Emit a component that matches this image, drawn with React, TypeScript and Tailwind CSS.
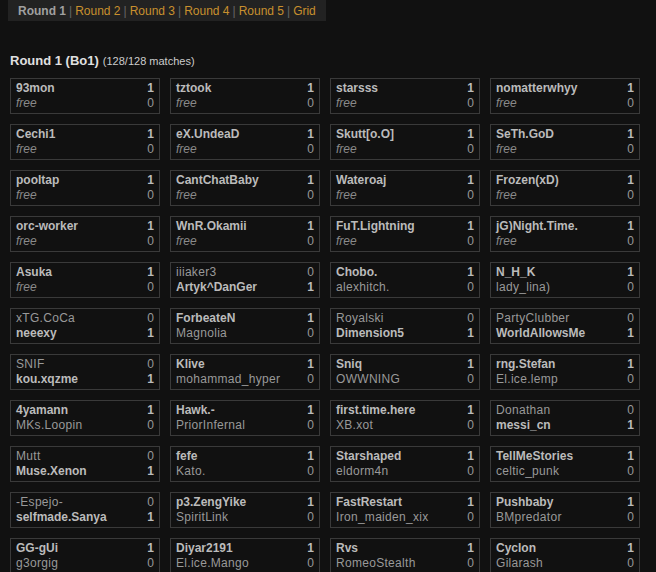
import React from 'react';

type Match = [string, number, string, number];

const matches: Match[] = [
  ['93mon', 1, 'free', 0],
  ['tztook', 1, 'free', 0],
  ['starsss', 1, 'free', 0],
  ['nomatterwhyy', 1, 'free', 0],
  ['Cechi1', 1, 'free', 0],
  ['eX.UndeaD', 1, 'free', 0],
  ['Skutt[o.O]', 1, 'free', 0],
  ['SeTh.GoD', 1, 'free', 0],
  ['pooltap', 1, 'free', 0],
  ['CantChatBaby', 1, 'free', 0],
  ['Wateroaj', 1, 'free', 0],
  ['Frozen(xD)', 1, 'free', 0],
  ['orc-worker', 1, 'free', 0],
  ['WnR.Okamii', 1, 'free', 0],
  ['FuT.Lightning', 1, 'free', 0],
  ['jG)Night.Time.', 1, 'free', 0],
  ['Asuka', 1, 'free', 0],
  ['iiiaker3', 0, 'Artyk^DanGer', 1],
  ['Chobo.', 1, 'alexhitch.', 0],
  ['N_H_K', 1, 'lady_lina)', 0],
  ['xTG.CoCa', 0, 'neeexy', 1],
  ['ForbeateN', 1, 'Magnolia', 0],
  ['Royalski', 0, 'Dimension5', 1],
  ['PartyClubber', 0, 'WorldAllowsMe', 1],
  ['SNIF', 0, 'kou.xqzme', 1],
  ['Klive', 1, 'mohammad_hyper', 0],
  ['Sniq', 1, 'OWWNING', 0],
  ['rng.Stefan', 1, 'El.ice.lemp', 0],
  ['4yamann', 1, 'MKs.Loopin', 0],
  ['Hawk.-', 1, 'PriorInfernal', 0],
  ['first.time.here', 1, 'XB.xot', 0],
  ['Donathan', 0, 'messi_cn', 1],
  ['Mutt', 0, 'Muse.Xenon', 1],
  ['fefe', 1, 'Kato.', 0],
  ['Starshaped', 1, 'eldorm4n', 0],
  ['TellMeStories', 1, 'celtic_punk', 0],
  ['-Espejo-', 0, 'selfmade.Sanya', 1],
  ['p3.ZengYike', 1, 'SpiritLink', 0],
  ['FastRestart', 1, 'Iron_maiden_xix', 0],
  ['Pushbaby', 1, 'BMpredator', 0],
  ['GG-gUi', 1, 'g3orgig', 0],
  ['Diyar2191', 1, 'El.ice.Mango', 0],
  ['Rvs', 1, 'RomeoStealth', 0],
  ['Cyclon', 1, 'Gilarash', 0],
];

const PlayerRow = ({ name, score }: { name: string; score: number }) => {
  const won = score > 0;
  const free = name === 'free';
  return (
    <div className="flex items-center justify-between h-[15px] leading-[15px]">
      <span
        className={
          won
            ? 'font-bold text-[#bbbbbb]'
            : free
              ? 'italic text-[#8a8a8a]'
              : 'text-[#999999] tracking-[0.3px]'
        }
      >
        {name}
      </span>
      <span className={won ? 'font-bold text-[#bbbbbb]' : 'text-[#999999]'}>{score}</span>
    </div>
  );
};

export default function App() {
  const tabs = ['Round 2', 'Round 3', 'Round 4', 'Round 5', 'Grid'];

  return (
    <div
      className="min-h-[572px] w-[656px] bg-[#111111] text-[12px] overflow-hidden"
      style={{ fontFamily: '"Liberation Sans", Arial, sans-serif' }}
    >
      {/* Round tabs */}
      <div className="ml-2 inline-flex items-center h-[21px] px-[10px] bg-[#222222] text-[12px]">
        <span className="font-bold text-[#a0a0a0]">Round 1</span>
        {tabs.map((t) => (
          <React.Fragment key={t}>
            <span className="text-[#666666] mx-[3px]">|</span>
            <span className="text-[#c8902e]">{t}</span>
          </React.Fragment>
        ))}
      </div>

      {/* Heading */}
      <div className="px-[10px] mt-[30px] h-[18px] flex items-baseline">
        <span className="font-bold text-[13px] text-[#e0e0e0]">Round 1 (Bo1)</span>
        <span className="ml-[4px] text-[11px] text-[#cccccc]">(128/128 matches)</span>
      </div>

      {/* Matches */}
      <div className="mt-[9px] px-[10px] grid grid-cols-[repeat(4,150px)] gap-x-[10px] gap-y-[10px]">
        {matches.map((m, i) => (
          <div key={i} className="h-[36px] border border-[#3a3a3a] px-[5px] py-[2px]">
            <PlayerRow name={m[0]} score={m[1]} />
            <PlayerRow name={m[2]} score={m[3]} />
          </div>
        ))}
      </div>
    </div>
  );
}
